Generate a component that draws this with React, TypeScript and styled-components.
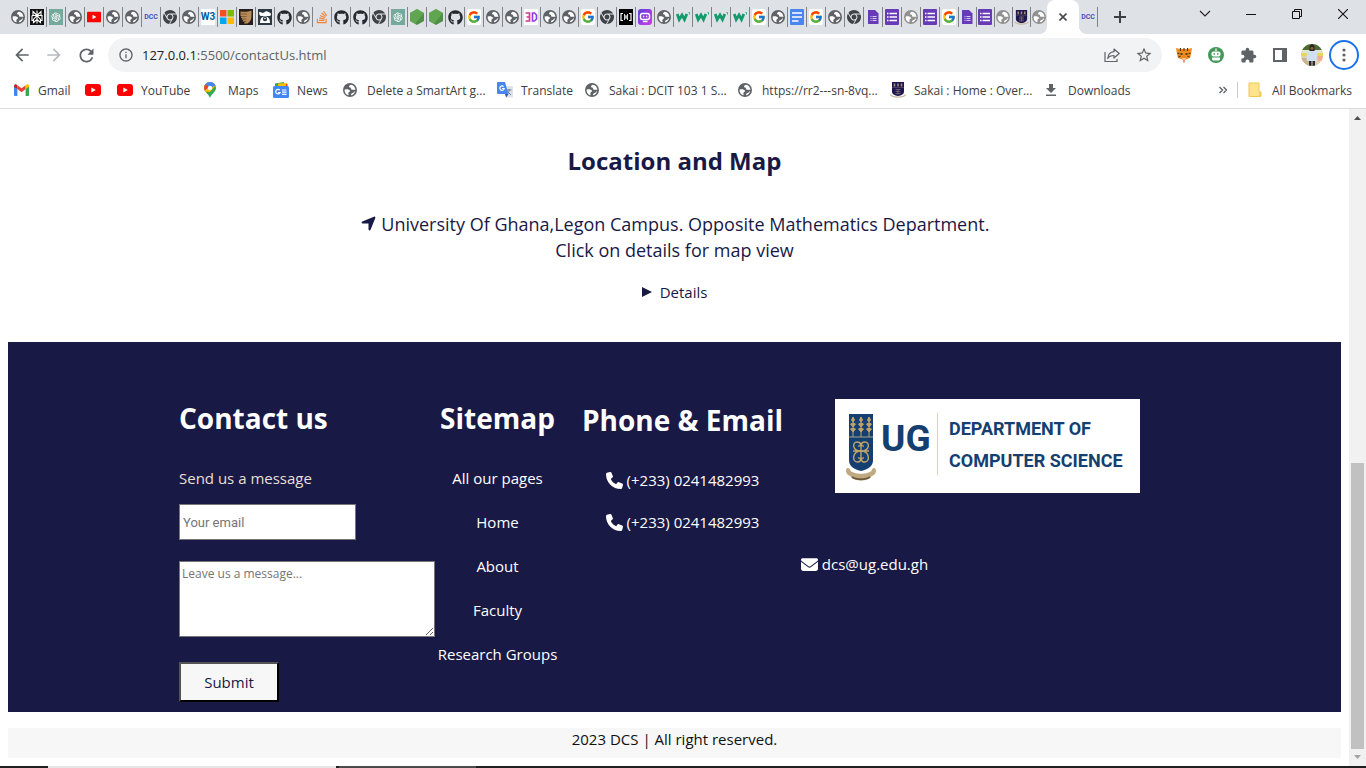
import React from 'react';
import styled, { createGlobalStyle } from 'styled-components';
import {
  FaChrome,
  FaEnvelope,
  FaGithub,
  FaLocationArrow,
  FaPhone,
  FaStackOverflow,
} from 'react-icons/fa6';
import { FcGoogle } from 'react-icons/fc';
import {
  MdArrowBack,
  MdArrowForward,
  MdExtension,
  MdInfoOutline,
  MdRefresh,
  MdStarBorder,
} from 'react-icons/md';
import { AiOutlineOpenAI } from 'react-icons/ai';

const ui = "'Open Sans', 'Noto Sans', sans-serif";
const navy = '#191945';

const GlobalStyle = createGlobalStyle`
  *, *::before, *::after { box-sizing: border-box; }
  body { margin: 0; background: #fff; font-family: ${ui}; }
  h2, p, ul { margin: 0; padding: 0; }
  ul { list-style: none; }
  a { color: inherit; text-decoration: none; }
  button { font-family: inherit; }
  svg { display: block; flex: none; }
`;

/* ---------- small drawings ---------- */

const Globe = ({ size = 14, color = '#5f6368' }: { size?: number; color?: string }) => (
  <svg width={size} height={size} viewBox="0 0 16 16">
    <circle cx="8" cy="8" r="8" fill={color} />
    <path
      d="M1.800 7.600C4 6.800 7 7 8.300 9c-.4 1.200-2.200 1-2.200 2.600 0 1 .6 1.900.2 2.500C3.500 13.400 1.700 10.800 1.800 7.600z"
      fill="#fff"
    />
    <path
      d="M9 1.900C6.800 2.600 6 4.600 8.400 5.200c1.300.4.300 2 1.600 2.500 1.400.5 2.600-.6 4.200.6 0-3.300-2-6-5.200-6.400z"
      fill="#fff"
    />
    <path d="M13.900 9.300c-.7 2.700-2.500 4.400-4.900 4.800.2-1.500.8-2.200 2-2.600 1.200-.5 1.200-1.900 2.900-2.200z" fill="#fff" />
  </svg>
);

const YouTube = ({ wide }: { wide?: boolean }) => (
  <svg width={wide ? 16 : 14} height="12" viewBox="0 0 16 12">
    <rect width="16" height="12" rx={wide ? 3 : 1} fill="#f00" />
    <path d="M6.300 3.400v5.200L10.800 6z" fill="#fff" />
  </svg>
);

const Crest = ({ size = 16 }: { size?: number }) => (
  <svg width={size} height={size} viewBox="0 0 16 16">
    <path d="M2 0h12v9.500c0 2.500-2.500 4-6 4.500-3.500-.5-6-2-6-4.500z" fill="#1d1650" />
    <path d="M4.500 1.500v3M8 1.500v3M11.500 1.500v3" stroke="#a98c76" strokeWidth="1.600" />
    <path d="M2 5.500h12" stroke="#6d5a6d" strokeWidth=".6" />
    <path d="M5.500 7.500h5M5.500 9.500h5M5.500 11.500h5M8 7v5.500" stroke="#77666f" strokeWidth=".9" />
    <path d="M.5 12.500c2 3.400 13 3.400 15 0" fill="none" stroke="#c9b8a0" strokeWidth="1.300" />
  </svg>
);

const Perplexity = () => (
  <svg width="14" height="16" viewBox="0 0 14 16">
    <rect width="14" height="16" fill="#111" />
    <path
      d="M7 1.500v13M3 2.500l4 4 4-4v4H3zM2 6.500h10v5h-1.500M2 6.500v5h1.500M7 6.500l-3.500 4v3L7 10.500l3.500 3v-3z"
      fill="none"
      stroke="#fff"
      strokeWidth="1.100"
    />
  </svg>
);

const Gpt = () => (
  <svg width="14" height="16" viewBox="0 0 14 16">
    <rect width="14" height="16" fill="#75a99c" />
    <g transform="translate(1 2)">
      <AiOutlineOpenAI size={12} color="#fff" />
    </g>
  </svg>
);

const Microsoft = () => (
  <svg width="14" height="16" viewBox="0 0 14 16">
    <path d="M0 1h6.500v6.500H0z" fill="#f25022" />
    <path d="M7.500 1H14v6.500H7.500z" fill="#7fba00" />
    <path d="M0 8.500h6.500V15H0z" fill="#00a4ef" />
    <path d="M7.500 8.500H14V15H7.500z" fill="#ffb900" />
  </svg>
);

const Quill = () => (
  <svg width="14" height="16" viewBox="0 0 14 16">
    <rect width="14" height="16" fill="#241d1a" />
    <path d="M1.500 2.500C5 3 9 3 12.500 1.500v6c0 3-1.500 5.500-4 7H5l1-2H3.500l1-1.700H2.500l1-1.800H2l.5-2h-1z" fill="#b98a5a" />
    <path d="M2 5h6M2.500 7.500h5M3.500 10h4M4.500 12.500h3" stroke="#6b4a2c" strokeWidth=".7" />
  </svg>
);

const Panda = () => (
  <svg width="14" height="16" viewBox="0 0 14 16">
    <rect width="14" height="16" fill="#2c3943" />
    <path d="M1 3.500C3 2 4 5 6 3.500S9 2 10.500 3 13 4 13 5.500s-1.500 1.500-2.500 1.500H4C2 7.500 1 5.500 1 3.500z" fill="#fff" />
    <path d="M2 14c0-4 1.500-6.500 5-6.500s5 2.500 5 6.500z" fill="#fff" />
    <circle cx="7" cy="10" r="2.200" fill="#2c3943" />
    <circle cx="7" cy="9.500" r=".8" fill="#fff" />
  </svg>
);

const NodeHex = () => (
  <svg width="14" height="16" viewBox="0 0 14 16">
    <path d="M7 0l7 4v8l-7 4-7-4V4z" fill="#4f8f45" />
    <path d="M7 0l7 4-9 11L0 12V4z" fill="#6fb85a" opacity=".55" />
  </svg>
);

const BlackBrackets = () => (
  <svg width="14" height="16" viewBox="0 0 14 16">
    <rect width="14" height="16" fill="#000" />
    <path d="M4 4.500H2v7h2M10 4.500h2v7h-2" fill="none" stroke="#fff" strokeWidth="1.200" />
    <path d="M5.500 5.500l3 5M8.500 5.500l-3 5M5.500 5v6M8.500 5v6" stroke="#fff" strokeWidth=".8" />
  </svg>
);

const PurpleBot = () => (
  <svg width="14" height="16" viewBox="0 0 14 16">
    <defs>
      <linearGradient id="botFill" x1="0" y1="0" x2="1" y2="1">
        <stop offset="0" stopColor="#5b3fd6" />
        <stop offset="1" stopColor="#d13bea" />
      </linearGradient>
    </defs>
    <rect width="14" height="16" rx="3" fill="url(#botFill)" />
    <rect x="2.500" y="4.500" width="9" height="6" rx="2" fill="none" stroke="#fff" strokeWidth="1.400" />
    <path d="M5 7.500h1.200M8 7.500h1.200M5 12.500h4.500" stroke="#fff" strokeWidth="1.300" />
  </svg>
);

const ThreeD = () => (
  <svg width="14" height="16" viewBox="0 0 14 16">
    <rect width="14" height="16" fill="#fff" />
    <path d="M1.500 4h4v4h-3 3v4h-4" fill="none" stroke="#e0348a" strokeWidth="1.700" />
    <path d="M8.500 4h2l2 2v4l-2 2h-2z" fill="none" stroke="#8a3ff0" strokeWidth="1.700" />
  </svg>
);

const GreenW = () => (
  <svg width="15" height="16" viewBox="0 0 15 16">
    <path d="M1.200 5l2 5.500L6 6l2.500 4.500 2.300-5.500" fill="none" stroke="#159a6c" strokeWidth="2.800" />
    <path d="M12.500 3.500h1v2" fill="none" stroke="#159a6c" strokeWidth=".8" />
  </svg>
);

const DocsFile = () => (
  <svg width="14" height="16" viewBox="0 0 14 16">
    <rect width="14" height="16" rx="1" fill="#4a86f0" />
    <path d="M2 4h10M2 8h10M2 12h6.500" stroke="#fff" strokeWidth="1.700" />
  </svg>
);

const FormFile = () => (
  <svg width="14" height="16" viewBox="0 0 14 16">
    <path d="M2 1h7l3.500 3.500V15H2z" fill="#673ab7" />
    <path d="M6.500 7.500h4M6.500 9.500h4M6.500 11.500h4" stroke="#d9cdf0" />
    <path d="M4.500 7.500h1M4.500 9.500h1M4.500 11.500h1" stroke="#d9cdf0" />
  </svg>
);

const FormSheet = () => (
  <svg width="14" height="16" viewBox="0 0 14 16">
    <rect width="14" height="16" rx="1" fill="#673ab7" />
    <path d="M4.500 4.500H12M4.500 8H12M4.500 11.500H12" stroke="#fff" strokeWidth="1.500" />
    <path d="M2 4.500h1.500M2 8h1.500M2 11.500h1.500" stroke="#fff" strokeWidth="1.500" />
  </svg>
);

const Wordmark = styled.span<{ $size: number; $color: string; $bg?: string }>`
  width: 14px;
  height: 16px;
  display: flex;
  align-items: center;
  justify-content: center;
  flex: none;
  font: bold ${p => p.$size}px/16px Roboto, sans-serif;
  color: ${p => p.$color};
  background: ${p => p.$bg ?? 'transparent'};
`;

const GoogleTile = styled.span`
  display: flex;
  align-items: center;
  justify-content: center;
  width: 14px;
  height: 16px;
  border-radius: 2px;
  background: #fff;
`;

const Gmail = () => (
  <svg width="15" height="12" viewBox="0 0 15 12">
    <path d="M0 2v9a1 1 0 0 0 1 1h2.400V4.500z" fill="#4285f4" />
    <path d="M15 2v9a1 1 0 0 1-1 1h-2.400V4.500z" fill="#34a853" />
    <path d="M3.400 1.200l4.100 3.100 4.100-3.100v3.900L7.500 8.200 3.400 5.100z" fill="#ea4335" />
    <path d="M0 2C0 .3 1.800-.3 3.400 1.200v3.900L0 2.800z" fill="#c5221f" />
    <path d="M15 2c0-1.700-1.800-2.300-3.400-.8v3.900L15 2.800z" fill="#fbbc04" />
  </svg>
);

const MapsPin = () => (
  <svg width="12" height="16" viewBox="0 0 12 16">
    <path d="M6 0a6 6 0 0 1 6 6c0 4-4.500 5.500-6 10C4.500 11.500 0 10 0 6a6 6 0 0 1 6-6z" fill="#34a853" />
    <path d="M6 0a6 6 0 0 1 5.500 3.600L6 10 1.500 9.800A6 6 0 0 1 0 6a6 6 0 0 1 6-6z" fill="#fbbc04" />
    <path d="M6 0a6 6 0 0 1 5.500 3.600L6 6 1.300 2.200A6 6 0 0 1 6 0z" fill="#4285f4" />
    <path d="M1.300 2.200L5 5 .8 8.500A6 6 0 0 1 1.300 2.200z" fill="#ea4335" />
    <circle cx="6" cy="6" r="2.200" fill="#fff" />
  </svg>
);

const News = () => (
  <svg width="16" height="16" viewBox="0 0 16 16">
    <path d="M2 1.500L11 0l.5 5H2z" fill="#34a853" />
    <path d="M5 1.500l9-.5.5 4H5z" fill="#fbbc04" />
    <path d="M13 2h1.500v3H13z" fill="#ea4335" />
    <rect y="4" width="16" height="12" rx="1.500" fill="#4285f4" />
    <path d="M6.800 8.200a2.300 2.300 0 1 0 .3 2.300H5" fill="none" stroke="#fff" strokeWidth="1.200" />
    <path d="M9 8h4.500M9 10.200h4.500M9 12.400h4.500" stroke="#fff" strokeWidth="1.200" />
  </svg>
);

const Translate = () => (
  <svg width="16" height="16" viewBox="0 0 16 16">
    <path d="M6 4h9a1 1 0 0 1 1 1v10.500H9z" fill="#dfe3e8" />
    <path d="M10 8h4.500M12.200 7v1c0 2-1.500 4-2.700 4.500M10.500 9.500l3.500 3.500" fill="none" stroke="#6d7f92" />
    <path d="M1 0h7l3.500 12H1a1 1 0 0 1-1-1V1a1 1 0 0 1 1-1z" fill="#4a86f0" />
    <path d="M8 12h3.500L9.200 15.500z" fill="#2a55c0" />
    <path d="M6.600 4.600a2.200 2.200 0 1 0 .6 1.900H5" fill="none" stroke="#fff" strokeWidth="1.200" />
  </svg>
);

const Download = () => (
  <svg width="14" height="14" viewBox="0 0 14 14">
    <path d="M5 1h4v4h3L7 10 2 5h3zM2 11.500h10V13H2z" fill="#5f6368" />
  </svg>
);

const Folder = () => (
  <svg width="14" height="16" viewBox="0 0 14 16">
    <path d="M1 1h10v9h2v4.500H1z" fill="#ffe390" stroke="#ecc94f" />
    <path d="M11 10v3l-1 1.500h3V10z" fill="#f5cf58" />
  </svg>
);

const Share = () => (
  <svg width="16" height="16" viewBox="0 0 16 16" fill="none" stroke="#5f6368" strokeWidth="1.200">
    <path d="M1 5v9.500h12V12" />
    <path d="M10 2l5.200 4.500L10 11V8.500c-3 0-5 1-6.200 3C4 8 6 5 10 4.600z" strokeLinejoin="round" />
  </svg>
);

const Fox = () => (
  <svg width="16" height="16" viewBox="0 0 16 16">
    <path d="M0 1l4 1h8l4-1-1 6-1 4-3 1-2 1H7l-2-1-3-1-1-4z" fill="#ef8a1d" />
    <path d="M4.500 1v3M8 1v3M11.500 1v3M1.500 6l2 1M14.500 6l-2 1M2.500 10l2-1M13.500 10l-2-1" stroke="#54371a" strokeWidth="1.200" />
    <path d="M4.500 7h2M9.500 7h2" stroke="#1d2b30" strokeWidth="1.600" />
    <path d="M6 11.500h4L8 13.500z" fill="#fff" />
    <path d="M7.300 12.500h1.400v3H7.300z" fill="#e4584e" />
  </svg>
);

const Robot = () => (
  <svg width="16" height="16" viewBox="0 0 16 16">
    <circle cx="8" cy="8" r="8" fill="#43985a" />
    <path d="M7.400 1.500h1.200V4H7.400z" fill="#fff" />
    <rect x="3.500" y="4.500" width="9" height="5" rx="2" fill="#fff" />
    <path d="M4 10.500h8v1.500c0 1-1 1.500-2 1.500H6c-1 0-2-.5-2-1.500z" fill="#fff" />
    <path d="M5.500 7h1.500M9 7h1.500" stroke="#43985a" strokeWidth="1.500" />
  </svg>
);

const SidePanel = () => (
  <svg width="14" height="14" viewBox="0 0 14 14">
    <path d="M1 1h12v12H1z" fill="none" stroke="#5f6368" strokeWidth="2" />
    <path d="M9 1h4v12H9z" fill="#5f6368" />
  </svg>
);

const Avatar = () => (
  <svg width="22" height="22" viewBox="0 0 22 22">
    <defs>
      <clipPath id="face">
        <circle cx="11" cy="11" r="11" />
      </clipPath>
    </defs>
    <g clipPath="url(#face)">
      <rect width="22" height="22" fill="#e3cfae" />
      <rect width="22" height="6" fill="#4d6a35" />
      <path d="M0 6h22v3H0z" fill="#dfe4d0" />
      <path d="M0 9h22v3H0z" fill="#e7d65a" />
      <path d="M14 12h8v5h-8z" fill="#efae92" />
      <path d="M0 14h8v8H0z" fill="#c9b48a" />
      <path d="M6 8l3-2h4l3 2 .5 9h-11z" fill="#cfe0f3" />
      <path d="M8.500 4c0-5 5-5 5 0v3h-5z" fill="#2d211c" />
      <circle cx="11" cy="4.300" r="1.600" fill="#8a5a42" />
      <path d="M8 17h2.500v5H8zM11.500 17H14v5h-2.500z" fill="#262b3a" />
    </g>
  </svg>
);

/* ---------- browser frame ---------- */

const Window = styled.div`
  min-height: 100vh;
  display: flex;
  flex-direction: column;
`;

const TabStrip = styled.div`
  display: flex;
  height: 34px;
  padding-left: 9px;
  background: #dee1e6;
  overflow: hidden;
`;

const Tab = styled.div<{ $tight?: boolean; $last?: boolean }>`
  flex: none;
  display: flex;
  align-items: center;
  width: ${p => (p.$tight ? 18 : 19)}px;
  height: 34px;
  padding-left: ${p => (p.$tight ? 1 : 2)}px;
  position: relative;

  &::after {
    content: '';
    position: absolute;
    right: 0;
    top: 7px;
    width: 1px;
    height: 20px;
    background: ${p => (p.$last ? 'transparent' : '#808387')};
  }
`;

const ActiveTab = styled.div`
  flex: none;
  position: relative;
  z-index: 1;
  width: 32px;
  height: 34px;
  margin-left: -2px;
  margin-right: 1px;
  display: flex;
  align-items: center;
  justify-content: center;
  background: #fff;
  border-radius: 8px 8px 0 0;

  &::before,
  &::after {
    content: '';
    position: absolute;
    bottom: 0;
    width: 8px;
    height: 8px;
  }
  &::before {
    left: -8px;
    background: radial-gradient(circle at 0 0, #dee1e6 8px, #fff 8px);
  }
  &::after {
    right: -8px;
    background: radial-gradient(circle at 100% 0, #dee1e6 8px, #fff 8px);
  }
`;

const PlainButton = styled.button<{ $width: number }>`
  flex: none;
  width: ${p => p.$width}px;
  padding: 0;
  border: 0;
  background: none;
  display: flex;
  align-items: center;
  justify-content: center;
  color: #5f6368;
`;

const WindowButtons = styled.div`
  display: flex;
  height: 28px;
  margin-left: auto;
`;

const Toolbar = styled.div`
  display: flex;
  align-items: stretch;
  height: 38px;
  padding: 4px 6px 0;
`;

const AddressBar = styled.div`
  flex: 1;
  display: flex;
  align-items: center;
  height: 34px;
  margin: 0 6px;
  padding: 0 2px 0 10px;
  border-radius: 17px;
  background: #f1f3f4;
  color: #5f6368;
  font-size: 13px;
`;

const Url = styled.span`
  flex: 1;
  margin-left: 8px;

  b {
    font-weight: 400;
    color: #202124;
  }
`;

const MenuRing = styled.span`
  width: 30px;
  height: 30px;
  border: 2px solid #1a73e8;
  border-radius: 50%;
  display: flex;
  align-items: center;
  justify-content: center;
`;

const BookmarkBar = styled.nav`
  display: flex;
  align-items: center;
  height: 37px;
  padding: 0 14px;
  border-bottom: 1px solid #dadce0;
  color: #3c4043;
  font-size: 12px;
  white-space: nowrap;
`;

const Bookmark = styled.a<{ $width?: number }>`
  flex: none;
  display: flex;
  align-items: center;
  width: ${p => (p.$width ? `${p.$width}px` : 'auto')};
`;

const BookmarkIcon = styled.span`
  width: 24px;
  flex: none;
`;

const More = styled.button`
  margin-left: auto;
  padding: 0 10px;
  border: 0;
  border-right: 1px solid #c8cacd;
  margin-right: 10px;
  background: none;
  height: 16px;
  color: #5f6368;
`;

const Viewport = styled.div`
  flex: 1;
  display: flex;
`;

const Document = styled.div`
  flex: 1;
  padding: 0 8px;
  color: ${navy};
`;

const ScrollBar = styled.div`
  width: 17px;
  display: flex;
  flex-direction: column;
  align-items: center;
  background: #f1f1f1;
`;

const ScrollThumb = styled.div`
  flex: 286;
  width: 13px;
  background: #c1c1c1;
`;

const ScrollGap = styled.div`
  flex: 337;
`;

const ScrollArrow = styled.svg`
  width: 17px;
  height: 17px;
`;

const TaskBar = styled.div`
  display: flex;
  gap: 3px;
  height: 2px;
  padding-left: 48px;
  background: #1f1f20;
`;

const TaskItem = styled.div<{ $width: number; $color: string }>`
  width: ${p => p.$width}px;
  background: ${p => p.$color};
`;

/* ---------- page ---------- */

const Location = styled.section`
  padding: 34px 0 38px;
  text-align: center;
`;

const LocationTitle = styled.h2`
  margin-bottom: 32px;
  font-size: 24px;
  line-height: 36px;
`;

const Directions = styled.p`
  margin-bottom: 17px;
  font-size: 18px;
  line-height: 26px;

  svg {
    display: inline-block;
    vertical-align: -1px;
  }
`;

const MapDetails = styled.details`
  font-size: 15px;
  line-height: 24px;

  summary {
    list-style: none;
    display: flex;
    align-items: center;
    justify-content: center;
    gap: 8px;
  }
`;

const Footer = styled.footer`
  display: flex;
  justify-content: center;
  padding: 56px 20px 10px 0;
  background: ${navy};
  color: #fff;
  font-size: 15px;
  line-height: 24px;
`;

const FooterTitle = styled.h2`
  margin-bottom: 28px;
  font-size: 28px;
  line-height: 40px;
  white-space: nowrap;
`;

const ContactForm = styled.form`
  display: flex;
  flex-direction: column;
  align-items: flex-start;
  width: 256px;
  margin-right: 3px;
`;

const FormNote = styled.p`
  margin-bottom: 14px;
  color: #eadfd6;
`;

const EmailInput = styled.input`
  width: 177px;
  height: 36px;
  margin-bottom: 21px;
  padding: 1px 3px;
  border: 1px solid #767676;
  background: #fff;
  font: 13px Roboto, sans-serif;
  &::placeholder { color: #757575; }
`;

const MessageInput = styled.textarea`
  width: 256px;
  height: 76px;
  margin-bottom: 25px;
  padding: 2px;
  border: 1px solid #767676;
  background: #fff;
  font: 12px/20px ${ui};
  &::placeholder { color: #757575; }
`;

const Submit = styled.button`
  width: 100px;
  height: 40px;
  padding: 0;
  border: 2px outset #000;
  background: #f7f7f7;
  color: ${navy};
  font-size: 15px;
`;

const Sitemap = styled.nav`
  width: 119px;
  display: flex;
  flex-direction: column;
  align-items: center;
  margin-right: 22px;
`;

const LinkList = styled.ul<{ $gap: number }>`
  display: flex;
  flex-direction: column;
  align-items: center;
  gap: ${p => p.$gap}px;
  white-space: nowrap;
`;

const Reach = styled.div`
  width: 571px;
  display: flex;
  flex-direction: column;
  align-items: center;
  gap: 18px;
`;

const ReachTop = styled.div`
  align-self: stretch;
  display: flex;
  justify-content: space-between;
  align-items: flex-start;
  padding-right: 10px;
`;

const Phones = styled.div`
  width: 207px;
  padding-top: 2px;
  display: flex;
  flex-direction: column;
  align-items: center;
`;

const IconLink = styled.a`
  display: flex;
  align-items: center;
  gap: 4px;
`;

const Logo = styled.div`
  display: flex;
  width: 305px;
  height: 94px;
  margin-top: 1px;
  padding: 14px 0 0 10px;
  background: #fff;
  color: #153f70;
  font-family: Roboto, 'Liberation Sans', sans-serif;
  font-weight: 700;
  white-space: nowrap;
`;

const LogoInitials = styled.span`
  width: 50px;
  margin-left: 4px;
  font-size: 37px;
  line-height: 52px;
`;

const LogoName = styled.span`
  margin-left: 6px;
  padding-left: 11px;
  height: 62px;
  border-left: 1px solid #d5d0c0;
  font-size: 18px;
  line-height: 32px;
`;

const Copyright = styled.p`
  margin: 16px 0 8px;
  height: 30px;
  background: #f7f7f7;
  color: #111;
  text-align: center;
  font-size: 15px;
  line-height: 22px;
`;

const DepartmentCrest = () => (
  <svg width="32" height="70" viewBox="0 0 32 70">
    <path d="M4 1h24v46c0 6-4 9-12 11C8 56 4 53 4 47z" fill="#153f70" />
    <path d="M4 24h24" stroke="#cbb98c" strokeWidth=".8" />
    <g stroke="#c0a368" strokeWidth="1" fill="#c0a368">
      {[8, 16, 24].map(x => (
        <path key={x} d={`M${x} 4v20M${x} 4l1.500 3-1.500 2-1.500-2zM${x} 10l2.500 1-2.500 3-2.500-3zM${x} 15l2.500 1-2.500 3-2.500-3z`} />
      ))}
    </g>
    <g fill="none" stroke="#c0a368" strokeWidth="1.400">
      <path d="M8 38h16M16 30v18M16 38c-9 0-9-9-4-9s4 5 1 4M16 38c9 0 9-9 4-9s-4 5-1 4M16 38c-9 0-9 11-4 11s4-5 1-4M16 38c9 0 9 11 4 11s-4-5-1-4" />
    </g>
    <path d="M1 57c1-3 4-2 4 0 3 5 19 5 22 0 0-2 3-3 4 0 0 3-1 5-4 6-5 6-17 6-22 0-3-1-4-3-4-6z" fill="#c0a880" />
    <path d="M7 64c4 3 14 3 18 0" fill="none" stroke="#6d5b3c" strokeWidth="2" />
  </svg>
);

const Google = () => (
  <GoogleTile>
    <FcGoogle size={14} />
  </GoogleTile>
);

const favicons: Record<string, React.ReactNode> = {
  g: <Globe />,
  l: <Globe color="#919191" />,
  p: <Perplexity />,
  a: <Gpt />,
  y: <YouTube />,
  d: <Wordmark $size={7} $color="#4a50bd">DCC</Wordmark>,
  c: <FaChrome size={14} color="#3f4246" />,
  '3': <Wordmark $size={10} $color="#005a9c" $bg="#fff">W3</Wordmark>,
  m: <Microsoft />,
  q: <Quill />,
  k: <Panda />,
  h: <FaGithub size={15} color="#24292f" />,
  s: <FaStackOverflow size={14} color="#ef8236" />,
  n: <NodeHex />,
  G: <Google />,
  D: <ThreeD />,
  b: <BlackBrackets />,
  u: <PurpleBot />,
  w: <GreenW />,
  o: <DocsFile />,
  f: <FormFile />,
  F: <FormSheet />,
  U: <Crest size={15} />,
};

const openTabs = 'gpagyggdcg3mqkhgshhcannhGggDggGcbugwwwwGgoGgcfFlFGfFlUl'.split('');

const bookmarks: { icon: React.ReactNode; label: string; width?: number }[] = [
  { icon: <Gmail />, label: 'Gmail', width: 71 },
  { icon: <YouTube wide />, label: '', width: 32 },
  { icon: <YouTube wide />, label: 'YouTube', width: 87 },
  { icon: <MapsPin />, label: 'Maps', width: 69 },
  { icon: <News />, label: 'News', width: 70 },
  { icon: <Globe />, label: 'Delete a SmartArt g...', width: 154 },
  { icon: <Translate />, label: 'Translate', width: 88 },
  { icon: <Globe />, label: 'Sakai : DCIT 103 1 S...', width: 153 },
  { icon: <Globe />, label: 'https://rr2---sn-8vq...', width: 152 },
  { icon: <Crest />, label: 'Sakai : Home : Over...', width: 154 },
  { icon: <Download />, label: 'Downloads' },
];

const sitePages = ['All our pages', 'Home', 'About', 'Faculty', 'Research Groups'];
const phones = ['(+233) 0241482993', '(+233) 0241482993'];

export default function App() {
  return (
    <Window>
      <GlobalStyle />
      <TabStrip>
        {openTabs.map((key, i) => (
          <Tab key={i} $tight={i >= 50} $last={i === openTabs.length - 1}>
            {favicons[key]}
          </Tab>
        ))}
        <ActiveTab>
          <svg width="8" height="8" viewBox="0 0 8 8" stroke="#45494d" strokeWidth="1.600">
            <path d="M.5.5l7 7M7.500.5l-7 7" />
          </svg>
        </ActiveTab>
        <Tab $tight>{favicons.d}</Tab>
        <PlainButton $width={44} aria-label="New tab">
          <svg width="12" height="12" viewBox="0 0 12 12" stroke="#3c4043" strokeWidth="2">
            <path d="M6 0v12M0 6h12" />
          </svg>
        </PlainButton>
        <WindowButtons>
          <PlainButton $width={46} aria-label="Search tabs">
            <svg width="12" height="8" viewBox="0 0 12 8" fill="none" stroke="#222" strokeWidth="1.100">
              <path d="M1 1l5 5 5-5" />
            </svg>
          </PlainButton>
          <PlainButton $width={46} aria-label="Minimize">
            <svg width="10" height="10" viewBox="0 0 10 10" stroke="#111">
              <path d="M0 5.500h10" />
            </svg>
          </PlainButton>
          <PlainButton $width={46} aria-label="Restore">
            <svg width="10" height="10" viewBox="0 0 10 10" fill="none" stroke="#111">
              <path d="M.5 2.500h7v7h-7zM2.500 2.500v-2h7v7h-2" />
            </svg>
          </PlainButton>
          <PlainButton $width={46} aria-label="Close">
            <svg width="10" height="10" viewBox="0 0 10 10" stroke="#111" strokeWidth="1.100">
              <path d="M0 0l10 10M10 0L0 10" />
            </svg>
          </PlainButton>
        </WindowButtons>
      </TabStrip>

      <Toolbar>
        <PlainButton $width={32} aria-label="Back"><MdArrowBack size={20} /></PlainButton>
        <PlainButton $width={32} aria-label="Forward"><MdArrowForward size={20} color="#b9bbbe" /></PlainButton>
        <PlainButton $width={32} aria-label="Reload"><MdRefresh size={21} /></PlainButton>
        <AddressBar>
          <MdInfoOutline size={16} />
          <Url><b>127.0.0.1</b>:5500/contactUs.html</Url>
          <PlainButton $width={32} aria-label="Share"><Share /></PlainButton>
          <PlainButton $width={32} aria-label="Bookmark this page"><MdStarBorder size={18} /></PlainButton>
        </AddressBar>
        <PlainButton $width={32} aria-label="Wallet"><Fox /></PlainButton>
        <PlainButton $width={32} aria-label="Assistant"><Robot /></PlainButton>
        <PlainButton $width={32} aria-label="Extensions"><MdExtension size={17} /></PlainButton>
        <PlainButton $width={32} aria-label="Side panel"><SidePanel /></PlainButton>
        <PlainButton $width={32} aria-label="Profile"><Avatar /></PlainButton>
        <PlainButton $width={32} aria-label="Menu">
          <MenuRing>
            <svg width="4" height="14" viewBox="0 0 4 14" fill="#5f6368">
              <circle cx="2" cy="2" r="1.600" />
              <circle cx="2" cy="7" r="1.600" />
              <circle cx="2" cy="12" r="1.600" />
            </svg>
          </MenuRing>
        </PlainButton>
      </Toolbar>

      <BookmarkBar>
        {bookmarks.map((b, i) => (
          <Bookmark key={i} href="#" $width={b.width} aria-label={b.label || 'YouTube'}>
            <BookmarkIcon>{b.icon}</BookmarkIcon>
            {b.label}
          </Bookmark>
        ))}
        <More aria-label="More bookmarks">
          <svg width="8" height="8" viewBox="0 0 8 8" fill="none" stroke="#5f6368" strokeWidth="1.400">
            <path d="M.5 1l3 3-3 3M4.500 1l3 3-3 3" />
          </svg>
        </More>
        <Bookmark href="#">
          <BookmarkIcon><Folder /></BookmarkIcon>
          All Bookmarks
        </Bookmark>
      </BookmarkBar>

      <Viewport>
        <Document>
          <Location>
            <LocationTitle>Location and Map</LocationTitle>
            <Directions>
              <FaLocationArrow size={17} /> University Of Ghana,Legon Campus. Opposite Mathematics Department.
              <br />
              Click on details for map view
            </Directions>
            <MapDetails>
              <summary>
                <svg width="10" height="10" viewBox="0 0 10 10" fill={navy}>
                  <path d="M0 0l10 5-10 5z" />
                </svg>
                Details
              </summary>
            </MapDetails>
          </Location>

          <Footer>
            <ContactForm>
              <FooterTitle>Contact us</FooterTitle>
              <FormNote>Send us a message</FormNote>
              <EmailInput type="email" placeholder="Your email" aria-label="Your email" />
              <MessageInput placeholder="Leave us a message..." aria-label="Leave us a message" />
              <Submit type="button">Submit</Submit>
            </ContactForm>
            <Sitemap>
              <FooterTitle>Sitemap</FooterTitle>
              <LinkList $gap={20}>
                {sitePages.map(page => (
                  <li key={page}><a href="#">{page}</a></li>
                ))}
              </LinkList>
            </Sitemap>
            <Reach>
              <ReachTop>
                <Phones>
                  <FooterTitle>Phone &amp; Email</FooterTitle>
                  <LinkList $gap={18}>
                    {phones.map((phone, i) => (
                      <li key={i}>
                        <IconLink href="tel:+2330241482993"><FaPhone size={17} />{phone}</IconLink>
                      </li>
                    ))}
                  </LinkList>
                </Phones>
                <Logo>
                  <DepartmentCrest />
                  <LogoInitials>UG</LogoInitials>
                  <LogoName>DEPARTMENT OF<br />COMPUTER SCIENCE</LogoName>
                </Logo>
              </ReachTop>
              <IconLink href="mailto:dcs@ug.edu.gh"><FaEnvelope size={17} />dcs@ug.edu.gh</IconLink>
            </Reach>
          </Footer>
          <Copyright>2023 DCS | All right reserved.</Copyright>
        </Document>
        <ScrollBar>
          <ScrollArrow viewBox="0 0 17 17"><path d="M5 11l3.500-4 3.500 4z" fill="#505050" /></ScrollArrow>
          <ScrollGap />
          <ScrollThumb />
          <ScrollArrow viewBox="0 0 17 17"><path d="M5 6l3.500 4L12 6z" fill="#a3a3a3" /></ScrollArrow>
        </ScrollBar>
      </Viewport>
      <TaskBar>
        <TaskItem $width={288} $color="#e4e4e4" />
        <TaskItem $width={137} $color="#4b4b4c" />
      </TaskBar>
    </Window>
  );
}
